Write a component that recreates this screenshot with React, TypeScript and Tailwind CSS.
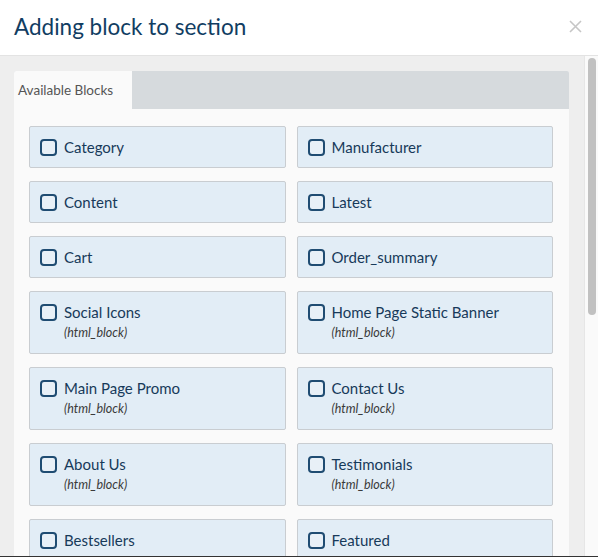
import React from "react";

type Block = { name: string; sub?: string };

const blocks: Block[] = [
  { name: "Category" },
  { name: "Manufacturer" },
  { name: "Content" },
  { name: "Latest" },
  { name: "Cart" },
  { name: "Order_summary" },
  { name: "Social Icons", sub: "(html_block)" },
  { name: "Home Page Static Banner", sub: "(html_block)" },
  { name: "Main Page Promo", sub: "(html_block)" },
  { name: "Contact Us", sub: "(html_block)" },
  { name: "About Us", sub: "(html_block)" },
  { name: "Testimonials", sub: "(html_block)" },
  { name: "Bestsellers" },
  { name: "Featured" },
];

function Card({ b }: { b: Block }) {
  return (
    <div className="border border-[#c9cdd1] rounded-[2px] bg-[#e2edf6] px-[10px] py-[12px]">
      <div className="flex items-center gap-[7px] h-[16px]">
        <span className="w-[17px] h-[17px] shrink-0 rounded-[4px] border-2 border-[#1f4c72] bg-[#e8f0f7]" />
        <span className="text-[15px] leading-[16px] text-[#173a5a]">{b.name}</span>
      </div>
      {b.sub && (
        <div className="mt-[5px] pl-[24px] text-[12.5px] leading-[16px] italic text-[#3a3a3a]">
          {b.sub}
        </div>
      )}
    </div>
  );
}

export default function App() {
  return (
    <div
      className="w-[598px] h-[557px] overflow-hidden bg-white flex flex-col"
      style={{ fontFamily: "Lato, 'Noto Sans', sans-serif" }}
    >
      <div className="h-[56px] shrink-0 flex items-center justify-between pl-[14px] pr-[16px] border-b border-[#e3e3e3]">
        <h1 className="text-[22.5px] text-[#113d62] leading-none -mt-[1px]">Adding block to section</h1>
        <svg width="13" height="13" viewBox="0 0 13 13" className="-mt-[2px]">
          <path d="M1 1 L12 12 M12 1 L1 12" stroke="#c6c6c6" strokeWidth="1.6" />
        </svg>
      </div>
      <div className="flex-1 flex min-h-0">
        <div className="flex-1 bg-[#eeeeee] pl-[14px] pr-[15px] pt-[15px] overflow-hidden">
          <div className="bg-[#fafafa] rounded-t-[2px]">
            <div className="flex bg-[#d6dadd] h-[38px] rounded-t-[2px]">
              <div className="bg-[#fafafa] pl-[4px] pt-[1px] flex items-center text-[13.5px] text-[#555555] w-[118px] rounded-tl-[2px]">
                Available Blocks
              </div>
            </div>
            <div className="grid grid-cols-2 gap-x-[11px] gap-y-[13px] pl-[15px] pr-[16px] pt-[17px] pb-[16px]">
              {blocks.map((b) => (
                <Card key={b.name} b={b} />
              ))}
            </div>
          </div>
        </div>
        <div className="w-[14px] shrink-0 bg-[#fafafa] border-l border-[#e6e6e6] pt-[2px] pl-[3px]">
          <div className="w-[8px] h-[257px] rounded-full bg-[#c1c1c1]" />
        </div>
      </div>
      <div className="h-[1px] shrink-0 bg-[#333333]" />
    </div>
  );
}
